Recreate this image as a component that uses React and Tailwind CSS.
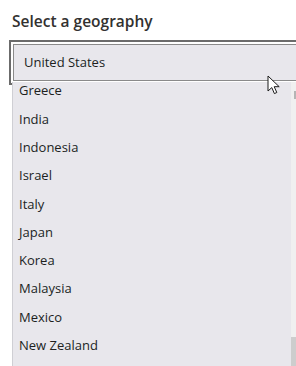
const countries = ["Greece", "India", "Indonesia", "Israel", "Italy", "Japan", "Korea", "Malaysia", "Mexico", "New Zealand"];

export default function App() {
  return (
    <div className="relative w-[296px] h-[366px] overflow-hidden bg-white text-[#201f1e] font-['Open_Sans',sans-serif]">
      <div className="pl-3 pt-[10px] h-[40px] text-[15.5px] font-semibold text-[#323130]">Select a geography</div>
      <div className="ml-[9px] border-2 border-r-0 border-[#6b6b6b] p-[2px] pr-0">
        <div className="h-[37px] border border-r-0 border-[#8a8a8a] bg-[#e8e7ec] pl-[10px] flex items-center text-[13px]">
          United States
        </div>
      </div>

      {/* open listbox */}
      <div className="absolute left-[12px] top-[82px] right-0 bottom-0 flex bg-[#e8e7ec] border-l border-[#cfcfd4]">
        <ul className="flex-1 pl-[6px] -mt-[5px]">
          {countries.map((c) => (
            <li key={c} className="h-[28.3px] flex items-center text-[13px]">{c}</li>
          ))}
        </ul>
        <div className="w-[5px] flex flex-col bg-[#f0f0f0] pt-[3px]">
          <div className="h-[8px] ml-[3px] border-l-2 border-[#b5b5b5] mt-[6px]" />
          <div className="flex-1" />
          <div className="h-[29px] bg-[#cdcdcd]" />
        </div>
      </div>

      {/* mouse cursor */}
      <svg className="absolute left-[267px] top-[75px]" width="14" height="21" viewBox="0 0 14 21">
        <path d="M1 1 L1 16 L4.8 12.6 L7.4 18.6 L9.8 17.5 L7.2 11.7 L12.2 11.7 Z" fill="white" stroke="#1a1a1a" strokeWidth="1" strokeLinejoin="round" />
      </svg>
    </div>
  );
}
